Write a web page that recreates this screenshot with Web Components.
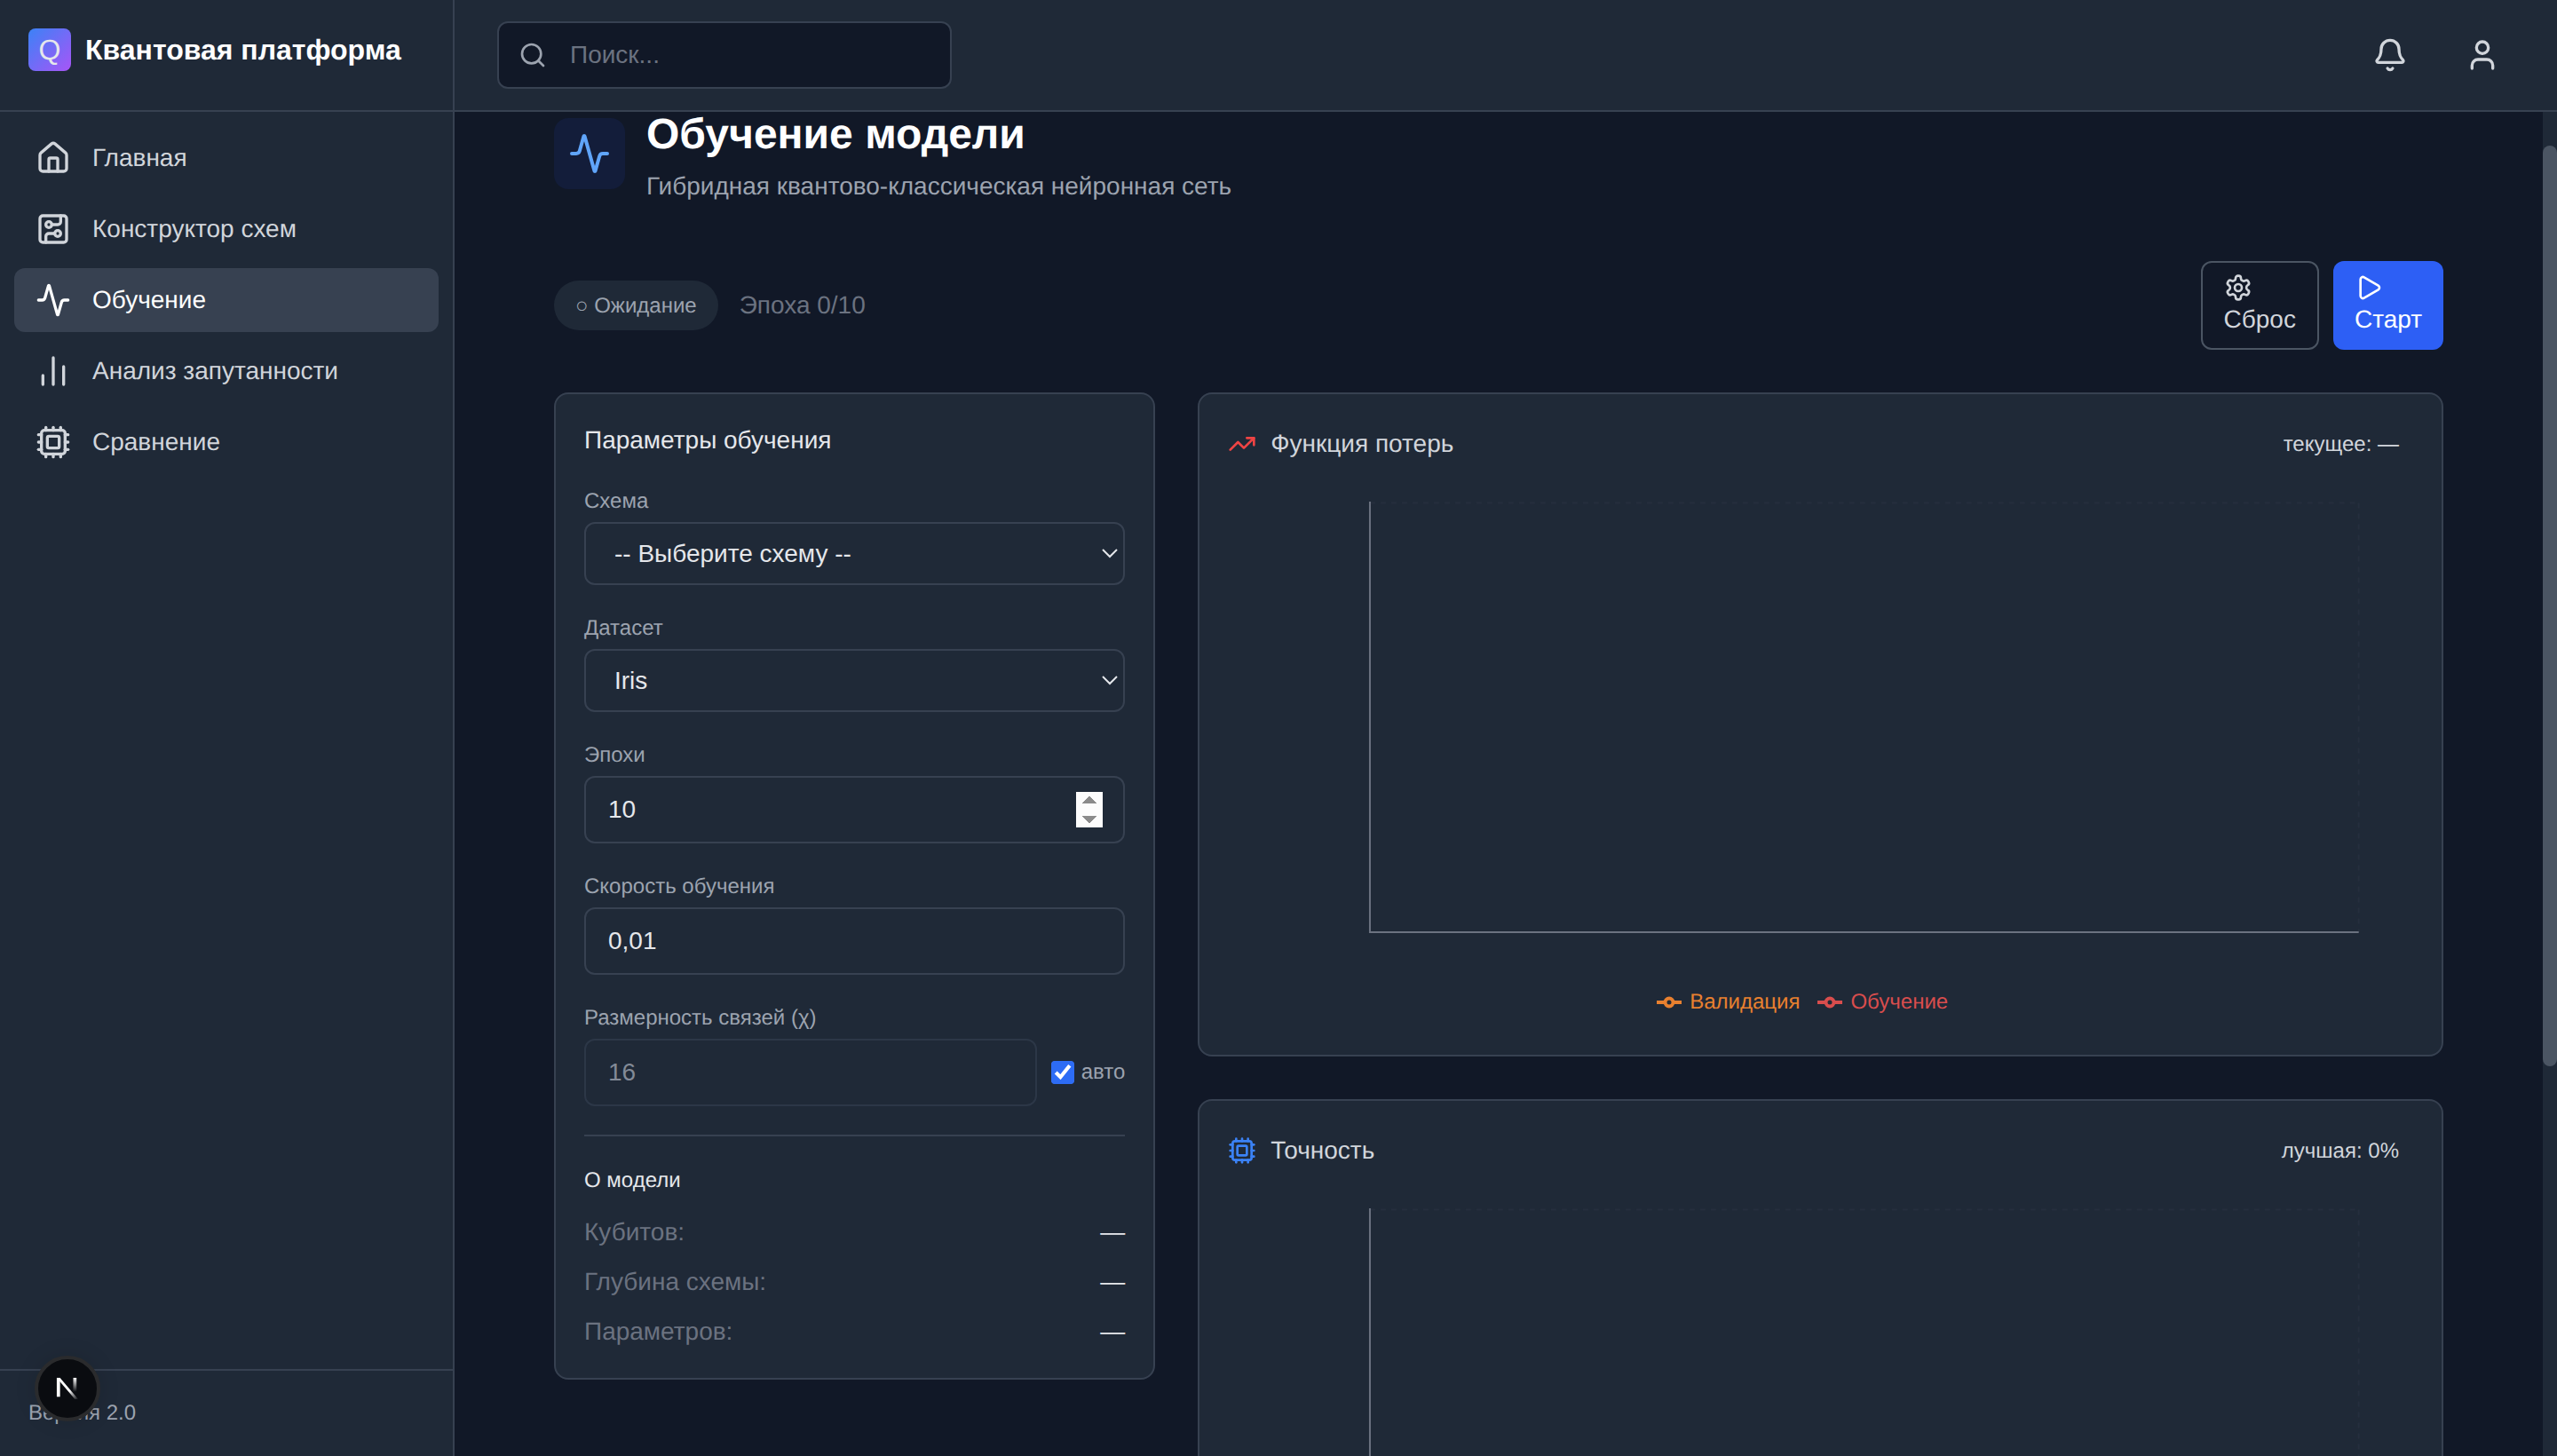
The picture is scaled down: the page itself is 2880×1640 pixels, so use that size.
<!DOCTYPE html>
<html lang="ru">
<head>
<meta charset="utf-8">
<title>Квантовая платформа</title>
<style>
  html, body { margin: 0; height: 100%; overflow: hidden; background: #111827; }
  body {
    font-family: "Liberation Sans", "Noto Sans", sans-serif;
    font-size: 28px;
    color: #e5e7eb;
    text-rendering: geometricPrecision;
  }
</style>
</head>
<body>
<q-app>
  <q-sidebar slot="side" version="Версия 2.0">
    <q-nav-item icon="house" label="Главная"></q-nav-item>
    <q-nav-item icon="circuit" label="Конструктор схем"></q-nav-item>
    <q-nav-item icon="activity" label="Обучение" active></q-nav-item>
    <q-nav-item icon="bars" label="Анализ запутанности"></q-nav-item>
    <q-nav-item icon="cpu" label="Сравнение"></q-nav-item>
  </q-sidebar>
  <q-topbar slot="top"></q-topbar>
  <q-main slot="main">
    <q-page-head heading="Обучение модели" sub="Гибридная квантово-классическая нейронная сеть"></q-page-head>
    <q-run-bar status="○ Ожидание" epoch="Эпоха 0/10"></q-run-bar>
    <q-training-grid>
      <q-params-card slot="params"></q-params-card>
      <q-chart-card slot="charts" icon="trending" tone="#ef4444" heading="Функция потерь" stat="текущее: —"></q-chart-card>
      <q-chart-card slot="charts" icon="cpu" tone="#3b82f6" heading="Точность" stat="лучшая: 0%"></q-chart-card>
    </q-training-grid>
  </q-main>
</q-app>
<q-dev-badge></q-dev-badge>

<script>
/* ── icons ────────────────────────────────────────────────────── */

const ICONS = {
  house: '<path d="M15 21v-8a1 1 0 0 0-1-1h-4a1 1 0 0 0-1 1v8"/><path d="M3 10a2 2 0 0 1 .709-1.528l7-5.999a2 2 0 0 1 2.582 0l7 5.999A2 2 0 0 1 21 10v9a2 2 0 0 1-2 2H5a2 2 0 0 1-2-2z"/>',
  circuit: '<rect width="18" height="18" x="3" y="3" rx="2"/><path d="M11 9h4a2 2 0 0 0 2-2V3"/><circle cx="9" cy="9" r="2"/><path d="M7 21v-4a2 2 0 0 1 2-2h4"/><circle cx="15" cy="15" r="2"/>',
  activity: '<path d="M22 12h-2.48a2 2 0 0 0-1.93 1.46l-2.35 8.36a.25.25 0 0 1-.48 0L9.24 2.18a.25.25 0 0 0-.48 0l-2.35 8.36A2 2 0 0 1 4.49 12H2"/>',
  bars: '<path d="M5 21v-6"/><path d="M12 21V3"/><path d="M19 21V9"/>',
  cpu: '<path d="M12 20v2"/><path d="M12 2v2"/><path d="M17 20v2"/><path d="M17 2v2"/><path d="M2 12h2"/><path d="M2 17h2"/><path d="M2 7h2"/><path d="M20 12h2"/><path d="M20 17h2"/><path d="M20 7h2"/><path d="M7 20v2"/><path d="M7 2v2"/><rect x="4" y="4" width="16" height="16" rx="2"/><rect x="8" y="8" width="8" height="8" rx="1"/>',
  search: '<path d="m21 21-4.34-4.34"/><circle cx="11" cy="11" r="8"/>',
  bell: '<path d="M10.268 21a2 2 0 0 0 3.464 0"/><path d="M3.262 15.326A1 1 0 0 0 4 17h16a1 1 0 0 0 .74-1.673C19.41 13.956 18 12.499 18 8A6 6 0 0 0 6 8c0 4.499-1.411 5.956-2.738 7.326"/>',
  user: '<path d="M19 21v-2a4 4 0 0 0-4-4H9a4 4 0 0 0-4 4v2"/><circle cx="12" cy="7" r="4"/>',
  settings: '<path d="M12.22 2h-.44a2 2 0 0 0-2 2v.18a2 2 0 0 1-1 1.73l-.43.25a2 2 0 0 1-2 0l-.15-.08a2 2 0 0 0-2.73.73l-.22.38a2 2 0 0 0 .73 2.73l.15.1a2 2 0 0 1 1 1.72v.51a2 2 0 0 1-1 1.74l-.15.09a2 2 0 0 0-.73 2.73l.22.38a2 2 0 0 0 2.73.73l.15-.08a2 2 0 0 1 2 0l.43.25a2 2 0 0 1 1 1.73V20a2 2 0 0 0 2 2h.44a2 2 0 0 0 2-2v-.18a2 2 0 0 1 1-1.73l.43-.25a2 2 0 0 1 2 0l.15.08a2 2 0 0 0 2.73-.73l.22-.39a2 2 0 0 0-.73-2.73l-.15-.08a2 2 0 0 1-1-1.74v-.5a2 2 0 0 1 1-1.74l.15-.09a2 2 0 0 0 .73-2.73l-.22-.38a2 2 0 0 0-2.73-.73l-.15.08a2 2 0 0 1-2 0l-.43-.25a2 2 0 0 1-1-1.73V4a2 2 0 0 0-2-2z"/><circle cx="12" cy="12" r="3"/>',
  play: '<path d="M5 5a2 2 0 0 1 3.008-1.728l11.997 6.998a2 2 0 0 1 .003 3.458l-12 7A2 2 0 0 1 5 19z"/>',
  trending: '<path d="M16 7h6v6"/><path d="m22 7-8.5 8.5-5-5L2 17"/>',
};

/** Base class: attaches the open shadow root and renders once. */
class QElement extends HTMLElement {
  constructor() {
    super();
    this.attachShadow({ mode: 'open' });
  }
  connectedCallback() {
    this.shadowRoot.innerHTML = this.render();
  }
  attr(name, fallback = '') {
    return this.getAttribute(name) ?? fallback;
  }
}

/* ── <q-icon> ─────────────────────────────────────────────────── */

class QIcon extends QElement {
  render() {
    const size = this.attr('size', '40');
    return `
      <style>
        :host { display: block; width: ${size}px; height: ${size}px; flex: none; color: inherit; }
        svg { display: block; }
      </style>
      <svg width="${size}" height="${size}" viewBox="0 0 24 24" fill="none" stroke="currentColor"
        stroke-width="2" stroke-linecap="round" stroke-linejoin="round">${ICONS[this.attr('name')] || ''}</svg>
    `;
  }
}
customElements.define('q-icon', QIcon);

/* ── <q-app> shell ────────────────────────────────────────────── */

class QApp extends QElement {
  render() {
    return `
      <style>
        :host { display: grid; grid-template-columns: 512px 1fr; grid-template-rows: 126px 1fr; height: 1640px; }
        .side { grid-row: 1 / 3; min-height: 0; display: flex; }
        .top { display: block; min-width: 0; }
        .main { min-height: 0; min-width: 0; display: flex; }
        ::slotted(q-sidebar), ::slotted(q-main) { flex: 1; min-width: 0; }
      </style>
      <div class="side"><slot name="side"></slot></div>
      <div class="top"><slot name="top"></slot></div>
      <div class="main"><slot name="main"></slot></div>
    `;
  }
}
customElements.define('q-app', QApp);

/* ── <q-sidebar> ──────────────────────────────────────────────── */

class QSidebar extends QElement {
  render() {
    return `
      <style>
        :host { display: flex; flex-direction: column; background: #1f2937; border-right: 2px solid #374151; box-sizing: border-box; }
        .brand { height: 126px; box-sizing: border-box; padding: 32px; display: flex; gap: 16px; align-items: flex-start; border-bottom: 2px solid #374151; }
        .logo { width: 48px; height: 48px; border-radius: 8px; background: linear-gradient(135deg, #3b82f6, #a855f7);
          display: flex; align-items: center; justify-content: center; color: #e5e7eb; font-size: 32px; line-height: 48px; }
        .name { font-size: 32px; line-height: 48px; font-weight: 700; color: #fff; white-space: nowrap; }
        nav { flex: 1; padding: 16px; display: flex; flex-direction: column; gap: 8px; }
        footer { border-top: 2px solid #374151; padding: 32px; font-size: 24px; line-height: 32px; color: #9ca3af; }
      </style>
      <div class="brand"><div class="logo">Q</div><div class="name">Квантовая платформа</div></div>
      <nav><slot></slot></nav>
      <footer>${this.attr('version')}</footer>
    `;
  }
}
customElements.define('q-sidebar', QSidebar);

class QNavItem extends QElement {
  render() {
    const active = this.hasAttribute('active');
    return `
      <style>
        :host { display: flex; align-items: center; gap: 24px; height: 72px; box-sizing: border-box; padding: 0 24px; border-radius: 12px;
          color: ${active ? '#fff' : '#d1d5db'}; background: ${active ? '#374151' : 'transparent'}; font-size: 28px; }
      </style>
      <q-icon name="${this.attr('icon')}"></q-icon><span>${this.attr('label')}</span>
    `;
  }
}
customElements.define('q-nav-item', QNavItem);

/* ── <q-topbar> ───────────────────────────────────────────────── */

class QTopbar extends QElement {
  render() {
    return `
      <style>
        :host { display: flex; align-items: center; justify-content: space-between; height: 126px; box-sizing: border-box;
          padding: 0 48px; background: #1f2937; border-bottom: 2px solid #374151; }
        .search { position: relative; width: 512px; height: 76px; }
        .search q-icon { position: absolute; left: 24px; top: 22px; color: #9ca3af; }
        input { width: 100%; height: 100%; box-sizing: border-box; padding: 0 24px 0 80px; background: #111827; color: #e5e7eb;
          border: 2px solid #374151; border-radius: 12px; font: inherit; font-size: 28px; outline: none; }
        input::placeholder { color: #6b7280; }
        .actions { display: flex; gap: 32px; }
        .actions div { padding: 16px; color: #d1d5db; }
      </style>
      <div class="search"><q-icon name="search" size="32"></q-icon><input placeholder="Поиск..."></div>
      <div class="actions">
        <div><q-icon name="bell"></q-icon></div>
        <div><q-icon name="user"></q-icon></div>
      </div>
    `;
  }
}
customElements.define('q-topbar', QTopbar);

/* ── <q-main> scroll container ────────────────────────────────── */

class QMain extends QElement {
  connectedCallback() {
    super.connectedCallback();
    // the reference is photographed slightly scrolled
    this.shadowRoot.querySelector('.scroll').scrollTop = 58;
  }
  render() {
    return `
      <style>
        :host { display: flex; background: #111827; min-height: 0; }
        .scroll { flex: 1; min-width: 0; height: 1514px; overflow-y: scroll; scrollbar-width: none; }
        .scroll::-webkit-scrollbar { display: none; }
        .inner { box-sizing: border-box; min-height: 2210px; padding: 48px 112px; }
        /* the scrollbar of the page, drawn since native ones are not painted here */
        .rail { flex: none; width: 16px; background: #1f2937; }
        .thumb { margin-top: 38px; height: 1037px; border-radius: 8px; background: #4b5563; }
      </style>
      <div class="scroll"><div class="inner"><slot></slot></div></div>
      <div class="rail"><div class="thumb"></div></div>
    `;
  }
}
customElements.define('q-main', QMain);

/* ── page head and run bar ────────────────────────────────────── */

class QPageHead extends QElement {
  render() {
    return `
      <style>
        :host { display: flex; align-items: center; gap: 24px; margin-bottom: 64px; }
        .tile { width: 80px; height: 80px; border-radius: 16px; background: #131d3a; color: #60a5fa;
          display: flex; align-items: center; justify-content: center; }
        h1 { margin: 0; padding-top: 4px; font-size: 48px; line-height: 64px; font-weight: 700; color: #fff; }
        p { margin: 6px 0 0; font-size: 28px; line-height: 40px; color: #9ca3af; }
      </style>
      <div class="tile"><q-icon name="activity" size="48"></q-icon></div>
      <div><h1>${this.attr('heading')}</h1><p>${this.attr('sub')}</p></div>
    `;
  }
}
customElements.define('q-page-head', QPageHead);

class QButton extends QElement {
  render() {
    const primary = this.hasAttribute('primary');
    return `
      <style>
        :host { display: block; box-sizing: border-box; border-radius: 12px; font-size: 28px; line-height: 40px;
          padding: ${primary ? '14px 24px' : '12px 24px'};
          border: ${primary ? 'none' : '2px solid #4b5563'};
          background: ${primary ? '#2d5ff5' : 'transparent'}; color: ${primary ? '#fff' : '#d1d5db'}; }
      </style>
      <q-icon name="${this.attr('icon')}" size="32"></q-icon><slot></slot>
    `;
  }
}
customElements.define('q-button', QButton);

class QRunBar extends QElement {
  render() {
    return `
      <style>
        :host { display: flex; align-items: center; justify-content: space-between; margin-bottom: 48px; }
        .left { display: flex; align-items: center; gap: 24px; }
        .pill { padding: 13px 24px 11px; border-radius: 9999px; background: #1f2937; color: #9ca3af; font-size: 24px; line-height: 32px; }
        .epoch { color: #6b7280; font-size: 28px; }
        .right { display: flex; gap: 16px; }
      </style>
      <div class="left"><span class="pill">${this.attr('status')}</span><span class="epoch">${this.attr('epoch')}</span></div>
      <div class="right">
        <q-button icon="settings">Сброс</q-button>
        <q-button icon="play" primary>Старт</q-button>
      </div>
    `;
  }
}
customElements.define('q-run-bar', QRunBar);

/* ── training grid ────────────────────────────────────────────── */

class QTrainingGrid extends QElement {
  render() {
    return `
      <style>
        :host { display: grid; grid-template-columns: repeat(3, 1fr); gap: 48px; align-items: start; }
        .charts { grid-column: span 2; display: flex; flex-direction: column; gap: 48px; min-width: 0; }
      </style>
      <div><slot name="params"></slot></div>
      <div class="charts"><slot name="charts"></slot></div>
    `;
  }
}
customElements.define('q-training-grid', QTrainingGrid);

/* ── <q-params-card> ──────────────────────────────────────────── */

class QParamsCard extends QElement {
  render() {
    return `
      <style>
        :host { display: block; box-sizing: border-box; background: #1f2937; border: 2px solid #374151; border-radius: 16px; padding: 32px; }
        h2 { margin: 0 0 32px; font-size: 28px; line-height: 40px; font-weight: 400; color: #e5e7eb; }
        .field { margin-bottom: 32px; }
        label { display: block; padding-top: 1px; font-size: 24px; line-height: 32px; color: #9ca3af; margin-bottom: 7px; }
        /* native controls at the reference's 2x scale */
        select, input { zoom: 2; display: block; box-sizing: border-box; font-family: inherit; font-size: 14px; color: #e5e7eb;
          background: #1f2937; border: 1px solid #374151; border-radius: 6px; outline: none; }
        select { width: 100%; height: 35.5px; padding: 0 8px 0 12px; }
        input.box { width: 100%; height: 38px; padding: 0 11.5px 0 12.5px; }
        input::-webkit-inner-spin-button { opacity: 1; height: 20px; }
        .bond { display: flex; align-items: center; gap: 16px; }
        .bond input.box { flex: 1; width: auto; min-width: 0; color: #9ca3af; }
        .bond input:disabled { border-color: #303b4c; opacity: .8; }
        .auto { display: flex; align-items: center; gap: 8px; font-size: 24px; line-height: 32px; color: #9ca3af; white-space: nowrap; }
        .auto input { margin: 0; accent-color: #2d6cf5; }
        .about { border-top: 2px solid #374151; padding-top: 32px; }
        h3 { margin: 0 0 22px; padding-top: 2px; font-size: 24px; line-height: 32px; font-weight: 400; color: #e5e7eb; }
        .row { display: flex; justify-content: space-between; line-height: 40px; color: #6b7280; }
        .row + .row { margin-top: 16px; }
        .row b { font-weight: 400; color: #e5e7eb; }
      </style>
      <h2>Параметры обучения</h2>
      <div class="field"><label>Схема</label><select><option>-- Выберите схему --</option></select></div>
      <div class="field"><label>Датасет</label><select><option>Iris</option></select></div>
      <div class="field"><label>Эпохи</label><input class="box" type="number" value="10"></div>
      <div class="field"><label>Скорость обучения</label><input class="box" type="text" value="0,01"></div>
      <div class="field">
        <label>Размерность связей (χ)</label>
        <div class="bond">
          <input class="box" type="text" value="16" disabled>
          <div class="auto"><input type="checkbox" checked><span>авто</span></div>
        </div>
      </div>
      <div class="about">
        <h3>О модели</h3>
        <div class="row"><span>Кубитов:</span><b>—</b></div>
        <div class="row"><span>Глубина схемы:</span><b>—</b></div>
        <div class="row"><span>Параметров:</span><b>—</b></div>
      </div>
    `;
  }
}
customElements.define('q-params-card', QParamsCard);

/* ── <q-chart-card> ───────────────────────────────────────────── */

class QLegendItem extends QElement {
  render() {
    const color = this.attr('color');
    return `
      <style>
        :host { display: inline-flex; align-items: center; gap: 9px; color: ${color}; font-size: 24px; line-height: 32px; }
        svg { display: block; }
      </style>
      <svg width="28" height="14" viewBox="0 0 28 14" fill="none" stroke="${color}" stroke-width="4">
        <path d="M0 7h28"/><circle cx="14" cy="7" r="4.5" fill="#1f2937"/>
      </svg><slot></slot>
    `;
  }
}
customElements.define('q-legend-item', QLegendItem);

class QChartCard extends QElement {
  render() {
    return `
      <style>
        :host { display: block; box-sizing: border-box; height: 748px; background: #1f2937; border: 2px solid #374151; border-radius: 16px; padding: 32px; }
        header { display: flex; align-items: center; gap: 16px; height: 48px; padding-right: 16px; margin-bottom: 32px; }
        .tone { color: ${this.attr('tone')}; }
        .title { flex: 1; font-size: 28px; color: #d1d5db; }
        .stat { padding-top: 2px; font-size: 24px; color: #d1d5db; }
        svg.plot { display: block; width: 100%; height: 546px; }
        .legend { box-sizing: border-box; height: 54px; padding: 11px 41px 0 0; display: flex; justify-content: center; align-items: flex-start; gap: 20px; }
      </style>
      <header>
        <q-icon class="tone" name="${this.attr('icon')}" size="32"></q-icon>
        <span class="title">${this.attr('heading')}</span>
        <span class="stat">${this.attr('stat')}</span>
      </header>
      <svg class="plot" viewBox="0 0 1335 546" fill="none">
        <path d="M160 10.5H1274M1274 10.5V494" stroke="#374151" stroke-opacity=".25" stroke-width="2" stroke-dasharray="6 6"/>
        <path d="M160 9V494H1274" stroke="#6b7280" stroke-width="2"/>
      </svg>
      <div class="legend">
        <q-legend-item color="#e8802f">Валидация</q-legend-item>
        <q-legend-item color="#d84d4d">Обучение</q-legend-item>
      </div>
    `;
  }
}
customElements.define('q-chart-card', QChartCard);

/* ── <q-dev-badge> framework dev indicator, lies over the footer ─ */

class QDevBadge extends QElement {
  render() {
    return `
      <style>
        :host { position: fixed; left: 39px; top: 1527px; width: 74px; height: 74px; box-sizing: border-box; border-radius: 50%;
          background: #0a0c10; border: 4px solid #2a2b2d; box-shadow: 0 0 24px rgba(0, 0, 0, .12); display: flex; align-items: center; justify-content: center; }
        svg { display: block; }
      </style>
      <svg width="26" height="28" viewBox="0 0 28 28" fill="none">
        <defs>
          <linearGradient id="fadeD" x1="12" y1="10" x2="26" y2="28" gradientUnits="userSpaceOnUse">
            <stop offset=".35" stop-color="#fff"/><stop offset="1" stop-color="#fff" stop-opacity="0"/>
          </linearGradient>
          <linearGradient id="fadeR" x1="23" y1="1" x2="23" y2="18" gradientUnits="userSpaceOnUse">
            <stop offset="0" stop-color="#fff"/><stop offset="1" stop-color="#fff" stop-opacity="0"/>
          </linearGradient>
        </defs>
        <path d="M1 1h4v23H1z" fill="#fff"/>
        <path d="M1 1h4l22 26h-4z" fill="url(#fadeD)"/>
        <path d="M21 1h4v18h-4z" fill="url(#fadeR)"/>
      </svg>
    `;
  }
}
customElements.define('q-dev-badge', QDevBadge);
</script>
</body>
</html>
